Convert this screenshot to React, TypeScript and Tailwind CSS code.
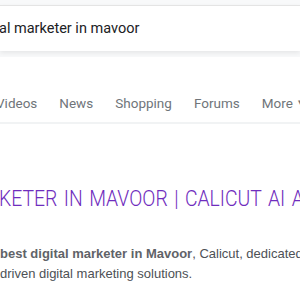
import React from 'react';

const tabs = ['Videos', 'News', 'Shopping', 'Forums'];

export default function App() {
    return (
        <div className="w-[300px] h-[300px] overflow-hidden bg-white" style={{ fontFamily: 'Arial' }}>
            <div className="bg-[#f8f9fa] pt-[5px] pb-[6px]">
                <div className="h-[46px] bg-white border-t border-[#e4e4e4] shadow-[0_2px_5px_rgba(0,0,0,0.08)] flex items-center">
                    <span className="text-[14.5px] text-[#202124] font-['Roboto',sans-serif] -ml-[1px]">al marketer in mavoor</span>
                </div>
            </div>
            <div className="mt-[36px] h-[31px] flex items-start border-b-2 border-[#f1f3f4] font-['Roboto',sans-serif] text-[13.5px] text-[#70757a] whitespace-nowrap">
                <span className="-ml-[4px] mr-[22px]">{tabs[0]}</span>
                <span className="mr-[22px]">{tabs[1]}</span>
                <span className="mr-[22px]">{tabs[2]}</span>
                <span className="mr-[22px]">{tabs[3]}</span>
                <span className="flex items-center">More<span className="ml-[5px] text-[9px]">▾</span></span>
            </div>
            <div className="mt-[58px] whitespace-nowrap text-[22px] text-[#6f2dbd] font-['Roboto',sans-serif] font-light -ml-[1px] origin-left scale-x-[0.88] [word-spacing:2px]">
                KETER IN MAVOOR | CALICUT AI AGENCY
            </div>
            <div className="mt-[29px] text-[13px] leading-[20px] text-[#4d5156] font-['Liberation_Sans',sans-serif] whitespace-nowrap">
                <div><b className="text-[#5f6368]">best digital marketer in Mavoor</b>, Calicut, dedicated to</div>
                <div>driven digital marketing solutions.</div>
            </div>
        </div>
    );
}
